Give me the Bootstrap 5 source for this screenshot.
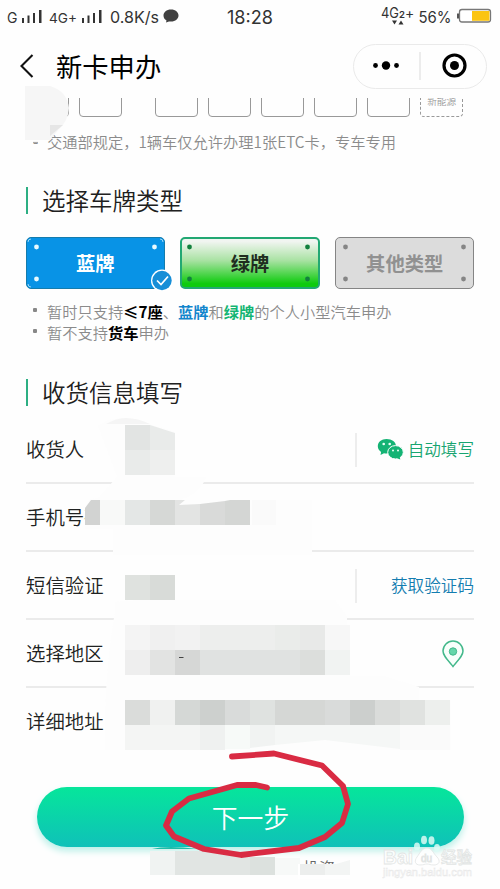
<!DOCTYPE html>
<html lang="zh-CN">
<head>
<meta charset="utf-8">
<meta name="viewport" content="width=device-width, initial-scale=1">
<title>新卡申办</title>
<link href="https://cdn.jsdelivr.net/npm/bootstrap@5.3.0/dist/css/bootstrap.min.css" rel="stylesheet">
<style>
body{font-family:"Noto Sans CJK SC","Noto Sans",sans-serif;background:#fefefe;color:#202221;font-weight:350;overflow:hidden}
.phone{width:500px;height:889px;overflow:hidden}
.status{height:34px;font-family:Inter,"Noto Sans CJK SC",sans-serif;font-weight:400;color:#333}
.titlebar{height:64px;padding-left:19px;padding-right:13px}
.page-name{font-size:26.3px;line-height:34px;color:#000;font-weight:400;margin:-1px 0 0 21px}
.capsule{width:134px;height:45px;border:1.5px solid #eaeaea}
.boxes{height:19px;padding-left:26px;gap:9.8px}
.slot{width:43.2px;height:50px;margin-top:-31px;border:1.6px solid #999;border-radius:4px;flex:none}
.slot.dot-gap{margin-right:23.2px}
.slot.energy{border-style:dashed;font-size:9.7px;line-height:12px;color:#999;padding-top:27px;text-align:center;white-space:nowrap}
.tip{font-size:15.25px;line-height:21px;color:#8b8b8b;white-space:nowrap}
.tip b{font-weight:700;color:#000}
.tip .blue{color:#1285cc}.tip .green{color:#13b573}
.tick{width:21px;padding-left:7px;flex:none}
.bullet{width:4px;height:4px;background:#888;border-radius:1px;margin:7px 10px 0 7px;flex:none}
.sect{font-size:23.5px;line-height:27px;height:27px;padding-left:14px;border-left:2px solid #2daf83;margin-left:26px;font-weight:350;color:#202020}
.plates{padding:0 26px;margin-top:23px;height:52px;gap:15px}
.plate{flex:1;border-radius:5px;font-size:19.3px;font-weight:700;border:1.5px solid}
.plate svg.screws{left:-1.5px;top:-1.5px}
.p-blue{background:#0893e6;border-color:#147cad;color:#fff}
.p-green{background:linear-gradient(#f1f5f1 5%,#a8e2a2 45%,#0ecb0e 93%);border:2.5px solid #22a873;color:#202d20}
.p-green svg.screws{left:-2.5px;top:-2.5px}
.p-grey{background:#dcdcdc;border-color:#858585;color:#919191}
.fields{margin:0 26px}
.field-row{height:68px;border-bottom:2px solid #ebebeb;font-size:19.4px;padding-top:1px}
.field-row>span{margin-top:-1px}
.field-row:last-child{border-bottom:0}
.field-row:last-child>span{margin-top:-3px}
.action{border-left:2px solid #ededed;height:34px;font-size:16.6px}
.btn-next{width:427px;height:60px;margin:31px 0 0 37px;border:0;border-radius:30px;background:linear-gradient(#06e69b,#0fc1b9);color:#fff;font-size:25.8px;font-weight:350;box-shadow:0 4px 7px #b8efe7}
.overlay{left:0;top:0;pointer-events:none}
</style>
<script src="https://cdn.jsdelivr.net/npm/bootstrap@5.3.0/dist/js/bootstrap.bundle.min.js"></script>
</head>
<body>
<main class="phone position-relative">
<header>
<svg class="status d-block" width="500" height="34" fill="#333">
<text x="7" y="23" font-size="14">G</text>
<g id="bars"><path d="M22 18h2v5h-2zM27.500 15.500h2v7.500h-2zM33 13h2v10h-2zM39 10h2.500v13H39z"/></g>
<text x="49" y="23" font-size="13.500" textLength="28" lengthAdjust="spacingAndGlyphs">4G+</text>
<use href="#bars" x="60"/>
<text x="110" y="22.500" font-size="16" textLength="49" lengthAdjust="spacingAndGlyphs">0.8K/s</text>
<path d="M171 9.500c4.500 0 7.500 2.700 7.500 6s-3 6-7.500 6h-2l-3 1 .5-2c-2-1-3-3-3-5 0-3.300 3-6 7.500-6z" fill="#404040"/>
<text x="227" y="23.500" font-size="18" textLength="46" lengthAdjust="spacingAndGlyphs">18:28</text>
<text x="381" y="18" font-size="14" textLength="18" lengthAdjust="spacingAndGlyphs">4G</text>
<text x="399" y="18" font-size="9.500" font-weight="600">2</text>
<text x="405" y="18" font-size="14">+</text>
<path d="M392 20.500h5l-2.500 4zM398.500 24.500h5l-2.500-4z"/>
<text x="418.500" y="23" font-size="16.500" textLength="33" lengthAdjust="spacingAndGlyphs">56%</text>
<rect x="459.500" y="9.500" width="31" height="12.500" rx="2.500" fill="#fff" stroke="#777" stroke-width="1.300"/>
<path d="M472 11h17.500v9.800H472z" fill="#fbc410"/><path d="M457 13.500h2v5h-2z" fill="#555"/>
</svg>
<div class="titlebar d-flex align-items-center">
<svg width="16" height="26" fill="none" stroke="#111" stroke-width="2.100"><path d="M13.500 2 2.500 13l11 11"/></svg>
<div class="page-name">新卡申办</div>
<div class="capsule rounded-pill ms-auto">
<svg class="d-block" width="131" height="42"><circle cx="21.500" cy="20.500" r="2.400"/><circle cx="32" cy="20.500" r="4.200"/><circle cx="42.500" cy="20.500" r="2.400"/><path d="M66 7v28" stroke="#e2e2e2" stroke-width="1.300"/><circle cx="100.500" cy="20.500" r="10.500" fill="none" stroke="#000" stroke-width="3.200"/><circle cx="100.500" cy="20.500" r="4.500"/></svg>
</div>
</div>
</header>
<section>
<div class="boxes d-flex overflow-hidden"><div class="slot"></div><div class="slot dot-gap"></div><div class="slot"></div><div class="slot"></div><div class="slot"></div><div class="slot"></div><div class="slot"></div><div class="slot energy">新能源</div></div>
<div class="tip d-flex" style="margin:14px 0 0 26px"><span class="tick">-</span><span>交通部规定，1辆车仅允许办理1张ETC卡，专车专用</span></div>
</section>
<section style="margin-top:35px">
<h2 class="sect mb-0">选择车牌类型</h2>
<div class="plates d-flex">
<div class="plate p-blue position-relative d-flex align-items-center justify-content-center">蓝牌
<svg class="screws position-absolute" width="139" height="52" overflow="visible" fill="#e9faff"><g id="screws"><circle cx="10.500" cy="10" r="2.400"/><circle cx="128.500" cy="10" r="2.400"/><circle cx="10.500" cy="42" r="2.400"/></g><path d="M2 5Q2 2 5 2M134 2q3 0 3 3M2 47q0 3 3 3" stroke="#9cd8f8" fill="none"/><circle cx="136" cy="43.500" r="11" fill="#fff"/><circle cx="136" cy="43.500" r="9.700" fill="#168ed7"/><path d="m131 43.500 4 4 7-8" stroke="#fff" stroke-width="1.700" fill="none"/></svg></div>
<div class="plate p-green position-relative d-flex align-items-center justify-content-center">绿牌
<svg class="screws position-absolute" width="139" height="52" fill="#12803e"><use href="#screws"/><circle cx="128.500" cy="42" r="2.400"/></svg></div>
<div class="plate p-grey position-relative d-flex align-items-center justify-content-center">其他类型
<svg class="screws position-absolute" width="139" height="52" fill="#858585"><use href="#screws"/><circle cx="128.500" cy="42" r="2.400"/></svg></div>
</div>
<div class="tip" style="margin:12px 0 0 26px">
<div class="d-flex"><i class="bullet"></i><span>暂时只支持<b>≤7座</b>、<b class="blue">蓝牌</b>和<b class="green">绿牌</b>的个人小型汽车申办</span></div>
<div class="d-flex"><i class="bullet"></i><span>暂不支持<b>货车</b>申办</span></div>
</div>
</section>
<section style="margin-top:36px">
<h2 class="sect mb-0">收货信息填写</h2>
<div class="fields" style="padding-top:10px">
<div class="field-row d-flex align-items-center justify-content-between"><span>收货人</span>
<div class="action d-flex align-items-center" style="color:#18a571;padding-left:20px">
<svg class="me-1" width="27" height="24" viewBox="0 0 27 24"><path d="M9.500 1C4.500 1 .8 4 .8 8.300c0 2.500 1.300 4.300 3.300 5.600L3.500 17l3.500-1.800c6 1 12-1.500 12-7C19 4 15 1 9.500 1z" fill="#14b374"/><ellipse cx="18.500" cy="14.300" rx="7.800" ry="6.700" fill="#14b374" stroke="#fff" stroke-width="1"/><path d="m19.500 20 3.800 1.500-.8-3.500z" fill="#14b374"/><g fill="#eafff5"><circle cx="6.700" cy="6" r="1.300"/><circle cx="12.700" cy="6" r="1.300"/><circle cx="16" cy="12.500" r="1"/><circle cx="21" cy="12.500" r="1"/></g></svg>自动填写</div></div>
<div class="field-row d-flex align-items-center"><span>手机号码</span></div>
<div class="field-row d-flex align-items-center justify-content-between"><span>短信验证</span><div class="action d-flex align-items-center" style="color:#147db0;padding-left:34px">获取验证码</div></div>
<div class="field-row d-flex align-items-center justify-content-between"><span>选择地区</span>
<svg style="margin-right:10px" width="22" height="28" viewBox="0 0 22 28"><path d="M11 26.500C5 19.500 1 15.500 1 11a10 10 0 0 1 20 0c0 4.500-4 8.500-10 15.500z" fill="#f8fffb" stroke="#43b88b" stroke-width="1.500"/><circle cx="11" cy="11.500" r="3.700" fill="#66d6aa" stroke="#43b88b"/></svg></div>
<div class="field-row d-flex align-items-center"><span>详细地址</span></div>
</div>
</section>
<button class="btn-next d-block p-0">下一步</button>

<svg class="overlay position-absolute" width="500" height="889" viewBox="0 0 500 889">
<!-- privacy smudges -->
<path d="M25 86h25q17 5 19 22-1 13-10 21l-9 11H25z" fill="#f6f6f6"/><path d="M50 125h13l-13 11z" fill="#e6e6e6"/><path d="M33 142.500h5" stroke="#aaa" stroke-width="1.200"/>
<path d="M98 426q10-8 24-8 12 0 25 5l28 9v45h31q-5 16-26 23h132v55H113v-26H85V508l4-8 10-3 18-20z" fill="#fdfdfd"/>
<path d="M106 424q10-6 20-6 12 0 24 6z" fill="#f5f5f5"/>
<path d="M125 425h25v25h-25z" fill="#e2e4e3"/><path d="M150 425l25 8v17h-25z" fill="#e9ebea"/><path d="M125 450h25v25h-25z" fill="#e9ebea"/><path d="M150 450h25v25h-25z" fill="#eeefee"/>
<path d="M91 500h9v25H85V508z" fill="#d2d3d2"/><path d="M100 500h25v25h-25z" fill="#f8f9f8"/><path d="M125 500h25v25h-25z" fill="#e4e7e6"/><path d="M150 500h25v25h-25z" fill="#d6d8d6"/><path d="M175 500h10l-6 5 21-1v21h-25z" fill="#e3e4e3"/><path d="M200 504l25-3v24h-25z" fill="#d9dad9"/><path d="M225 501l5-1h20v25h-25z" fill="#d4d6d4"/><path d="M252 500h24v25h-24z" fill="#fafafa"/>
<path d="M115 602q10-2 30-2h190l12 16v9h3v51h35l34 11v13h32v50H105v-35q2-60 10-103z" fill="#fdfdfd"/>
<path d="M125 575h25v25h-25z" fill="#dfe2df"/><path d="M150 575h25v25h-25z" fill="#d8dbd8"/>
<g><path d="M125 625h25v25h-25z" fill="#f4f4f4"/><path d="M150 625h25v25h-25z" fill="#f0f0f0"/><path d="M175 625h25v25h-25z" fill="#f2f2f2"/><path d="M200 625h75v25h-75z" fill="#edeeed"/><path d="M275 625h25v25h-25z" fill="#eaecea"/><path d="M300 625h25v25h-25z" fill="#e8e9e8"/><path d="M325 625h25v25h-25z" fill="#f7f7f7"/><path d="M125 650h25v25h-25z" fill="#eeeeee"/><path d="M150 650h25v25h-25z" fill="#e2e3e2"/><path d="M175 650h25v25h-25z" fill="#d6d7d6"/><path d="M200 650h100v25H200z" fill="#e0e2e1"/><path d="M300 650h25v25h-25z" fill="#dcdedc"/><path d="M325 650h25v25h-25z" fill="#f1f3f2"/></g>
<path d="M179 657.500h4.500" stroke="#444" stroke-width="1"/>
<g><path d="M125 700h25v25h-25z" fill="#dadcda"/><path d="M150 700h25v25h-25z" fill="#f0f1f0"/><path d="M175 700h25v25h-25z" fill="#d5d8d6"/><path d="M200 700h25v25h-25z" fill="#cdd0ce"/><path d="M225 700h25v25h-25z" fill="#d9dbda"/><path d="M250 700h25v25h-25z" fill="#dfe2e0"/><path d="M275 700h50v25h-50z" fill="#d5d7d5"/><path d="M325 700h25v25h-25z" fill="#d9dbda"/><path d="M350 700h25v25h-25z" fill="#cccfcd"/><path d="M375 700h25v25h-25z" fill="#dadcda"/><path d="M400 700h25v25h-25z" fill="#e0e2e0"/><path d="M425 700h25v25h-25z" fill="#edefed"/></g>
<path d="M125 725h75v25h-75z" fill="#f4f5f4"/><path d="M200 725h25v25h-25z" fill="#eff1f0"/><path d="M225 725h25v24h-25z" fill="#f7faf8"/><path d="M250 725h25v20l-25 3z" fill="#f1f3f2"/><path d="M275 725h125v24l-75-9-50 5z" fill="#f5f7f6"/><path d="M400 725h50v25h-50z" fill="#fafafa"/>
<path d="M150 851h25v24h-25z" fill="#f0f3f2"/><path d="M175 851h75v24h-75z" fill="#e1e5e3"/><path d="M250 857h25v18h-25z" fill="#dce1de"/><path d="M275 858h25v17h-25z" fill="#f7f9f8"/>
<text x="303" y="874" font-size="16" fill="#666">投资</text><path d="M298 864h52v15h-52z" fill="#fff"/><path d="M300 864h25v11h-25z" fill="#eceeed"/><path d="M325 864h11l14-4v15h-25z" fill="#f3f5f4"/>
<path d="M152 849q15-4 46 0z" fill="#20bda9"/>
<!-- hand-drawn ring -->
<path d="M232 756.500l42-3 48 12 21 20.500 5 18-6 19-17 14-26 11-58 7-37-6-30-12.500-8-11 6-14 17-13 48-13.500h19l11 2.500" fill="none" stroke="#d92b43" stroke-width="5.800" stroke-linejoin="round" stroke-linecap="round"/>
<!-- site watermark -->
<g fill="#fff" fill-opacity=".85" stroke="#e2e5e4" stroke-width=".8" font-family="Liberation Sans,Noto Sans CJK SC,sans-serif">
<text x="383" y="864" font-size="20" font-weight="700" textLength="30" lengthAdjust="spacingAndGlyphs">Bai</text><g stroke="none" fill="#dcfaf5"><ellipse cx="417" cy="846.500" rx="3" ry="4"/><ellipse cx="424" cy="840" rx="3" ry="4.300"/><ellipse cx="431.500" cy="840.500" rx="3" ry="4.300"/><ellipse cx="437" cy="848" rx="3" ry="4"/></g><path d="M427 848c5 0 6 5 10 9s2 8-3 8c-4 0-4-1-7-1s-3 1-7 1c-5 0-6-4-3-8s5-9 10-9z"/>
<text x="421" y="862" font-size="10" font-weight="400" fill="#e4ebe9">du</text>
<text x="441" y="863" font-size="15.500" font-weight="500" font-family="Noto Sans CJK SC">经验</text>
<text x="383" y="876" font-size="11" stroke="#e8e8e8" stroke-width=".5" textLength="89" lengthAdjust="spacingAndGlyphs">jingyan.baidu.com</text></g>
</svg>
</main>
</body>
</html>
